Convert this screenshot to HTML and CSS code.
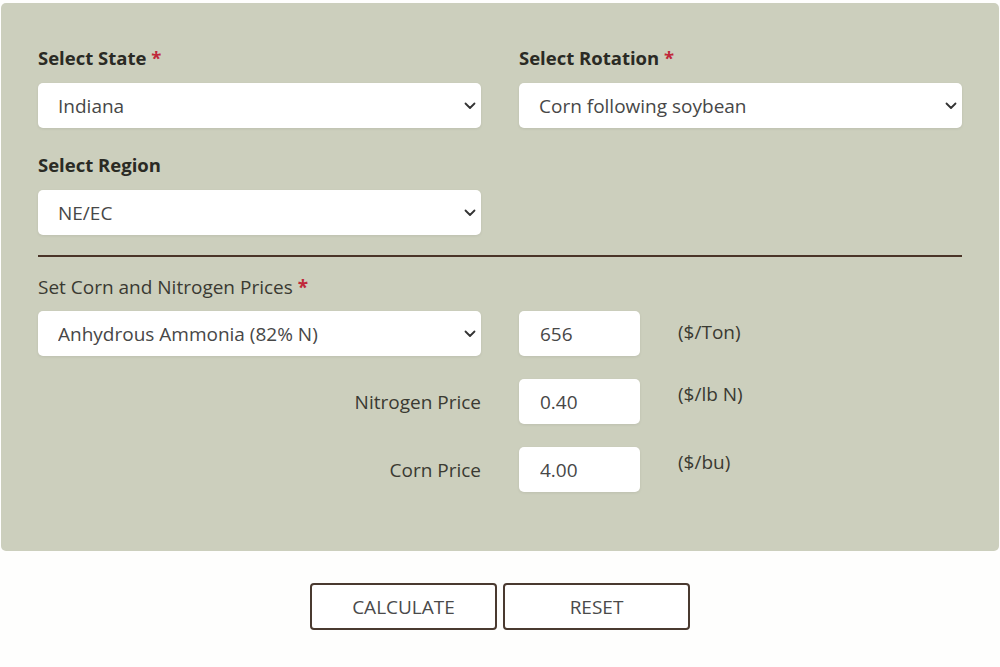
FILE: index.html
```html
<!DOCTYPE html>
<html lang="en">
<head>
<meta charset="utf-8">
<title>Nitrogen Rate Calculator</title>
<link rel="stylesheet" href="styles.css">
</head>
<body>
<form class="calc">
  <div class="panel">
    <div class="grid">
      <div class="field">
        <label class="label">Select State <span class="req">*</span></label>
        <div class="select-wrap">
          <select class="select"><option>Indiana</option></select>
          <svg class="chev" viewBox="0 0 12 8" width="12" height="8"><path d="M1.5 1.5 6 6l4.5-4.5" fill="none" stroke="#333" stroke-width="1.8" stroke-linecap="round" stroke-linejoin="round"/></svg>
        </div>
      </div>
      <div class="field">
        <label class="label">Select Rotation <span class="req">*</span></label>
        <div class="select-wrap">
          <select class="select"><option>Corn following soybean</option></select>
          <svg class="chev" viewBox="0 0 12 8" width="12" height="8"><path d="M1.5 1.5 6 6l4.5-4.5" fill="none" stroke="#333" stroke-width="1.8" stroke-linecap="round" stroke-linejoin="round"/></svg>
        </div>
      </div>
      <div class="field field-second">
        <label class="label">Select Region</label>
        <div class="select-wrap">
          <select class="select"><option>NE/EC</option></select>
          <svg class="chev" viewBox="0 0 12 8" width="12" height="8"><path d="M1.5 1.5 6 6l4.5-4.5" fill="none" stroke="#333" stroke-width="1.8" stroke-linecap="round" stroke-linejoin="round"/></svg>
        </div>
      </div>
    </div>
    <hr class="divider">
    <div class="prices-label">Set Corn and Nitrogen Prices <span class="req">*</span></div>
    <div class="prices">
      <div class="select-wrap">
        <select class="select"><option>Anhydrous Ammonia (82% N)</option></select>
        <svg class="chev" viewBox="0 0 12 8" width="12" height="8"><path d="M1.5 1.5 6 6l4.5-4.5" fill="none" stroke="#333" stroke-width="1.8" stroke-linecap="round" stroke-linejoin="round"/></svg>
      </div>
      <input class="input" type="text" value="656">
      <span class="unit unit-first">($/Ton)</span>

      <span class="row-label">Nitrogen Price</span>
      <input class="input" type="text" value="0.40">
      <span class="unit">($/lb N)</span>

      <span class="row-label">Corn Price</span>
      <input class="input" type="text" value="4.00">
      <span class="unit">($/bu)</span>
    </div>
  </div>
  <div class="actions">
    <button type="button" class="btn">CALCULATE</button>
    <button type="button" class="btn">RESET</button>
  </div>
</form>
</body>
</html>
```

FILE: styles.css
```css
* { box-sizing: border-box; }

html, body {
  margin: 0;
  padding: 0;
  background: #fefefd;
}

body {
  font-family: "Open Sans", "Noto Sans", sans-serif;
  color: #333;
}

.calc {
  width: 1000px;
  height: 667px;
  padding-top: 3px;
}

.panel {
  margin: 0 1px;
  background: #cccfbd;
  border-radius: 5px;
  padding: 43px 37px 59px;
}

.grid {
  display: grid;
  grid-template-columns: 443px 443px;
  column-gap: 38px;
  row-gap: 25px;
}

.field {
  display: flex;
  flex-direction: column;
  gap: 13px;
}

.label {
  font-size: 18.5px;
  line-height: 24px;
  font-weight: 700;
  color: #2a2a24;
}

.req {
  color: #c0283a;
  font-weight: 700;
}

.select-wrap {
  position: relative;
  height: 45px;
}

.select {
  appearance: none;
  -webkit-appearance: none;
  width: 100%;
  height: 45px;
  border: none;
  border-radius: 5px;
  background: #fff;
  padding: 0 30px 0 20px;
  font-family: inherit;
  font-size: 19px;
  color: #474747;
  box-shadow: 0 1px 3px rgba(0,0,0,0.08);
}

.chev {
  position: absolute;
  right: 5px;
  top: 19px;
  pointer-events: none;
}

.divider {
  border: none;
  height: 2px;
  background: #4a3428;
  margin: 20px 0 0;
}

.prices-label {
  margin-top: 18px;
  font-size: 19px;
  line-height: 24px;
  color: #3a3a32;
}

.prices {
  margin-top: 12px;
  display: grid;
  grid-template-columns: 443px 121px auto;
  column-gap: 38px;
  row-gap: 23px;
  align-items: center;
}

.input {
  width: 121px;
  height: 45px;
  border: none;
  border-radius: 5px;
  background: #fff;
  padding: 0 10px 0 21px;
  font-family: inherit;
  font-size: 19px;
  color: #474747;
  box-shadow: 0 1px 3px rgba(0,0,0,0.08);
}

.unit {
  align-self: start;
  padding-top: 3px;
  font-size: 19px;
  line-height: 24px;
  color: #3a3a32;
}

.unit-first {
  padding-top: 9px;
}

.row-label {
  text-align: right;
  font-size: 19px;
  line-height: 24px;
  color: #3a3a32;
}

.actions {
  display: flex;
  justify-content: center;
  gap: 6px;
  margin-top: 32px;
}

.btn {
  width: 187px;
  height: 47px;
  background: #fff;
  border: 2px solid #4a3a30;
  border-radius: 4px;
  font-family: inherit;
  font-size: 19px;
  color: #4a4a4a;
  cursor: pointer;
}
```
